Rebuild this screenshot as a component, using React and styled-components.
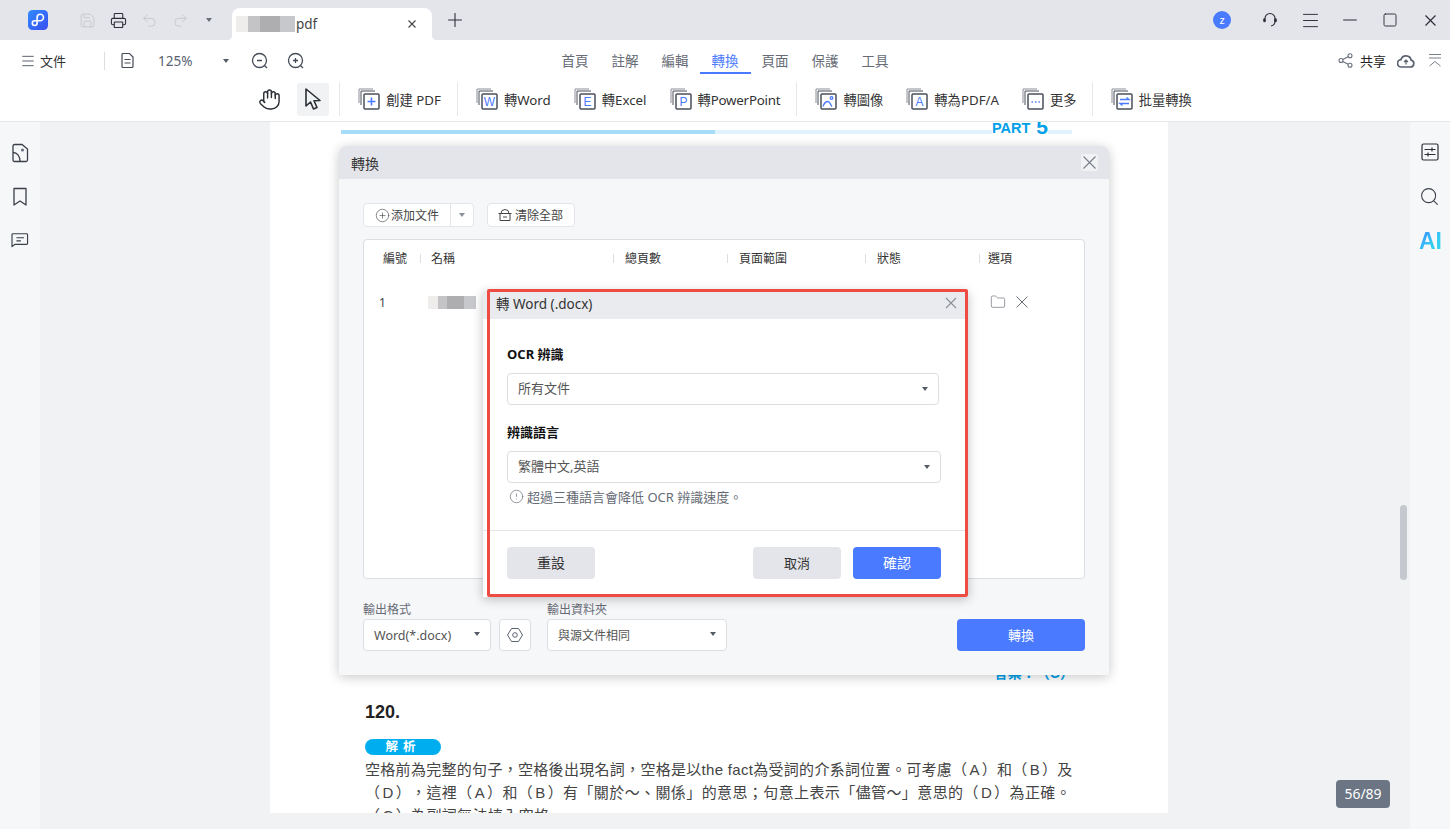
import React from 'react'
import styled, { createGlobalStyle } from 'styled-components'
import { Printer, Undo2, Redo2, Save, Plus, Minus, Menu, Square, Hand, Folder, CirclePlus, CircleAlert, Search } from 'lucide-react'

const Global = createGlobalStyle`
  html, body { margin: 0; padding: 0; height: 100%; overflow: hidden; }
  body { font-family: "Liberation Sans", "Noto Sans CJK TC", sans-serif; color: #333; }
  * { box-sizing: border-box; }
`

const UI_FONT = `"Noto Sans", "Noto Sans CJK TC", sans-serif`

const Shell = styled.div`
  width: 100%;
  height: 100vh;
  display: flex;
  flex-direction: column;
  background: #fff;
  font-family: ${UI_FONT};
`

// ---- title bar
const TitleBar = styled.div`
  height: 40px;
  flex: none;
  display: flex;
  align-items: center;
  background: #e4e5ea;
  padding-left: 28px;
`
const Logo = styled.svg`
  width: 20px;
  height: 20px;
  margin-right: 24px;
`
const QuickSlot = styled.div`
  width: 31px;
  display: flex;
  justify-content: center;
  color: ${p => (p.$off ? '#c4c6cb' : '#2c2f36')};
`
const Caret = styled.span`
  width: 0;
  height: 0;
  border-left: 3.5px solid transparent;
  border-right: 3.5px solid transparent;
  border-top: 4px solid ${p => p.$color || '#555b66'};
`
const CaretSlot = styled.div`
  display: flex;
  margin: 0 20px 0 10px;
`
const DocTab = styled.div`
  position: relative;
  align-self: flex-end;
  width: 200px;
  height: 32px;
  background: #fff;
  border-radius: 8px 8px 0 0;
  display: flex;
  align-items: center;
  padding: 0 16px 0 4px;
  font-size: 13.5px;
  color: #444;
  &::before, &::after {
    content: '';
    position: absolute;
    bottom: 0;
    width: 5px;
    height: 5px;
  }
  &::before { left: -5px; background: radial-gradient(circle at 0 0, #e4e5ea 5px, #fff 5.5px); }
  &::after { right: -5px; background: radial-gradient(circle at 100% 0, #e4e5ea 5px, #fff 5.5px); }
`
const BlurName = styled.span`
  display: block;
  flex: none;
  width: ${p => p.$w}px;
  height: ${p => p.$h}px;
  background: linear-gradient(90deg, #eeedeb 0 20%, #c4c4c6 20% 40%, #aeaeb0 40% 75%, #c6c8cc 75% 100%);
`
const TabName = styled.span`
  flex: 1;
  margin-left: 1px;
`
const NewTab = styled.div`
  display: flex;
  color: #2c2f36;
  margin-left: 12px;
`
const WinControls = styled.div`
  margin-left: auto;
  display: flex;
  align-items: center;
`
const Avatar = styled.div`
  width: 18px;
  height: 18px;
  border-radius: 50%;
  background: #4a7aff;
  color: #fff;
  font-size: 11px;
  line-height: 17px;
  text-align: center;
  margin-right: 19px;
`
const WinSlot = styled.div`
  width: 40px;
  display: flex;
  justify-content: center;
  color: #2c2f36;
`

// ---- menu bar
const MenuBar = styled.div`
  height: 41px;
  flex: none;
  display: grid;
  grid-template-columns: 1fr auto 1fr;
  align-items: center;
`
const MenuLeft = styled.div`
  display: flex;
  align-items: center;
  padding-left: 20px;
  color: #444b57;
`
const MenuLabel = styled.span`
  font-size: 13px;
  color: #333;
  margin-left: 4px;
`
const MenuDivider = styled.span`
  width: 1px;
  height: 18px;
  background: #dcdde0;
  margin: 0 15px 0 38px;
`
const Percent = styled.span`
  font-size: 13.5px;
  color: #5a6270;
  margin: 0 31px 0 22px;
`
const ZoomSlot = styled.div`
  display: flex;
  margin-left: ${p => p.$ml || 0}px;
`
const Tabs = styled.div`
  display: flex;
  gap: 23px;
`
const TabItem = styled.div`
  position: relative;
  font-size: 13.5px;
  line-height: 20px;
  color: ${p => (p.$active ? '#4a7aff' : '#666b75')};
  &::after {
    content: ${p => (p.$active ? "''" : 'none')};
    position: absolute;
    left: -12px;
    right: -12px;
    bottom: -3px;
    height: 2px;
    background: #4a7aff;
  }
`
const MenuRight = styled.div`
  display: flex;
  align-items: center;
  justify-content: flex-end;
  padding-right: 8px;
  color: #5a6270;
`
const ShareLabel = styled.span`
  font-size: 13px;
  color: #222;
  margin: 0 11px 0 7px;
`

// ---- tool bar
const ToolBar = styled.div`
  height: 41px;
  flex: none;
  display: flex;
  align-items: center;
  justify-content: center;
  padding-bottom: 4px;
  border-bottom: 1px solid #e5e6e8;
`
const ToolGroup = styled.div`
  display: flex;
  align-items: center;
  gap: ${p => p.$gap || 23}px;
`
const ToolSep = styled.span`
  width: 1px;
  height: 34px;
  background: #e6e7e9;
  margin: 0 18px 0 ${p => p.$left || 16}px;
`
const PointerBtn = styled.div`
  width: 32px;
  height: 33px;
  border-radius: 3px;
  background: #f1f2f4;
  display: flex;
  align-items: center;
  justify-content: center;
`
const ToolIconSlot = styled.div`
  display: flex;
  color: #2c2f36;
`
const ToolItem = styled.div`
  display: flex;
  align-items: center;
  gap: 6px;
  font-size: 13.3px;
  letter-spacing: ${p => p.$ls || 0}px;
  color: #333;
  white-space: nowrap;
`

// ---- body
const Body = styled.div`
  flex: 1;
  min-height: 0;
  display: flex;
`
const Rail = styled.div`
  width: 40px;
  flex: none;
  background: #f6f7f9;
  display: flex;
  flex-direction: column;
  align-items: center;
  gap: ${p => p.$gap}px;
  padding: ${p => p.$top}px ${p => p.$pr || 0}px 0 0;
  color: #3a3f4a;
`
const RailIcon = styled.div`
  height: 20px;
  display: flex;
  align-items: center;
  justify-content: center;
`
const AiMark = styled.div`
  font-family: "Liberation Sans", sans-serif;
  font-weight: 700;
  font-size: 23px;
  line-height: 24px;
  margin-left: 2px;
  background: linear-gradient(135deg, #3a8cff 10%, #37c8f6 55%, #2fd9e6);
  -webkit-background-clip: text;
  background-clip: text;
  color: transparent;
`
const Canvas = styled.div`
  position: relative;
  flex: 1;
  min-width: 0;
  background: #f1f2f4;
  padding: 0 0 16px 230px;
`
const Page = styled.div`
  position: relative;
  width: 898px;
  height: 100%;
  background: #fff;
  overflow: hidden;
  padding: 8px 96px 0 95px;
  font-family: "Liberation Sans", "Noto Sans CJK TC", sans-serif;
  text-spacing-trim: space-all;
`
const Track = styled.div`
  height: 4px;
  margin-left: -24px;
  background: linear-gradient(90deg, #a5dcf8 0 51.2%, #e0f3fd 51.2% 100%);
`
const PartMark = styled.div`
  position: absolute;
  top: 0;
  left: 722px;
  width: 56px;
  height: 14px;
  overflow: hidden;
  background: #fff;
  color: #00a0e9;
  font-weight: 700;
  font-size: 14.5px;
  line-height: 13px;
  white-space: nowrap;
  display: flex;
  justify-content: space-between;
`
const PartDigit = styled.span`
  font-size: 21px;
  line-height: 9px;
`
const Answer = styled.div`
  margin: 529px -2px 0 0;
  text-align: right;
  color: #00a0e9;
  font-weight: 700;
  font-size: 14px;
  line-height: 20px;
`
const Question = styled.div`
  margin-top: 17px;
  font-size: 18px;
  font-weight: 700;
  line-height: 24px;
  color: #222;
`
const Pill = styled.div`
  margin-top: 15px;
  width: 76px;
  height: 16px;
  border-radius: 8px;
  background: #00aeef;
  color: #fff;
  font-size: 12.5px;
  font-weight: 700;
  line-height: 16px;
  letter-spacing: 5px;
  text-align: center;
`
const Para = styled.div`
  margin-top: 3px;
  font-size: 15px;
  line-height: 23px;
  color: #444;
  white-space: nowrap;
`
const ParaLine = styled.div`
  letter-spacing: ${p => p.$ls || 0.4}px;
`
const Opt = styled.span`
  padding: 0 2px;
`
const Scroll = styled.div`
  position: absolute;
  right: 3px;
  top: 383px;
  width: 7px;
  height: 75px;
  border-radius: 4px;
  background: #c5c8ce;
`
const Counter = styled.div`
  position: absolute;
  right: 20px;
  bottom: 21px;
  width: 54px;
  height: 28px;
  border-radius: 4px;
  background: #6b7584;
  color: #fff;
  font-size: 14px;
  line-height: 28px;
  text-align: center;
`

// ---- convert dialog
const Dialog = styled.div`
  position: absolute;
  left: 69px;
  top: 24px;
  width: 770px;
  height: 529px;
  background: #f6f7f9;
  border-radius: 8px 8px 0 0;
  box-shadow: 0 2px 12px rgba(0, 0, 0, 0.22);
  display: flex;
  flex-direction: column;
  font-family: ${UI_FONT};
`
const DialogHead = styled.div`
  height: 33px;
  flex: none;
  background: #e4e5ea;
  border-radius: 8px 8px 0 0;
  display: flex;
  align-items: center;
  justify-content: space-between;
  padding: 0 11px 0 12px;
  font-size: 14px;
  color: #333;
`
const HeadClose = styled.div`
  width: 17px;
  height: 17px;
  background: #f1f2f4;
  border-radius: 3px;
  display: flex;
  align-items: center;
  justify-content: center;
  color: #777c86;
`
const DialogBody = styled.div`
  flex: 1;
  padding: 24px 24px 0;
  display: flex;
  flex-direction: column;
`
const FileActions = styled.div`
  display: flex;
  gap: 13px;
  height: 24px;
`
const ActionBtn = styled.div`
  height: 24px;
  background: #fff;
  border: 1px solid #e4e5ea;
  border-radius: 4px;
  display: flex;
  align-items: center;
  font-size: 12px;
  color: #444;
`
const ActionText = styled.span`
  display: flex;
  align-items: center;
  gap: ${p => p.$gap || 1}px;
  padding: 0 11px 0 ${p => p.$pl || 11}px;
`
const ActionArrow = styled.span`
  width: 23px;
  height: 100%;
  border-left: 1px solid #e4e5ea;
  display: flex;
  align-items: center;
  justify-content: center;
`
const FileTable = styled.div`
  margin-top: 12px;
  height: 340px;
  background: #fff;
  border: 1px solid #dcdee2;
  border-radius: 4px;
`
const TableRow = styled.div`
  display: grid;
  grid-template-columns: 56px 193px 114px 138px 114px 1fr;
  height: ${p => p.$h}px;
  align-items: center;
  font-size: 12px;
  color: #333;
`
const HeadCell = styled.div`
  display: flex;
  align-items: center;
  gap: ${p => p.$gap || 10}px;
  padding-left: ${p => p.$pl || 0}px;
`
const CellSep = styled.span`
  width: 1px;
  height: 9px;
  background: #dcdee2;
`
const RowCell = styled.div`
  display: flex;
  align-items: center;
  gap: 10px;
  padding-left: ${p => p.$pl || 0}px;
  color: #444;
`
const RowIcons = styled(RowCell)`
  color: #666b75;
`
const FooterRow = styled.div`
  margin-top: 24px;
  display: flex;
  align-items: flex-end;
`
const Field = styled.div`
  width: ${p => p.$w}px;
  margin-right: ${p => p.$mr}px;
`
const FieldLabel = styled.div`
  font-size: 12px;
  line-height: 14px;
  margin-bottom: 2px;
  color: #666b75;
`
const SelectBox = styled.div`
  width: ${p => (p.$w ? `${p.$w}px` : '100%')};
  height: 32px;
  background: #fff;
  border: 1px solid #dcdee2;
  border-radius: 4px;
  display: flex;
  align-items: center;
  justify-content: space-between;
  padding: 0 10px;
  font-size: ${p => p.$fs || 12}px;
  color: #555;
`
const SubSelect = styled(SelectBox)`
  font-size: 13px;
  padding-bottom: 3px;
`
const SmallCaret = styled(Caret)`
  margin-bottom: 3px;
`
const SubCaret = styled(Caret)`
  margin-top: 2px;
`
const GearBtn = styled.div`
  width: 32px;
  height: 32px;
  margin-right: 16px;
  background: #fff;
  border: 1px solid #dcdee2;
  border-radius: 4px;
  display: flex;
  align-items: center;
  justify-content: center;
  color: #5a6270;
`
const Primary = styled.div`
  width: ${p => p.$w || 88}px;
  height: 32px;
  margin-left: ${p => (p.$auto ? 'auto' : '0')};
  border-radius: 4px;
  background: #4a7aff;
  color: #fff;
  font-size: ${p => p.$fs || 13}px;
  line-height: 32px;
  text-align: center;
`

// ---- word options dialog
const SubDialog = styled.div`
  position: absolute;
  left: 144px;
  top: 145px;
  width: 485px;
  height: 306px;
  background: #fff;
  box-shadow: 0 2px 10px rgba(0, 0, 0, 0.25);
  display: flex;
  flex-direction: column;
`
const RedFrame = styled.div`
  position: absolute;
  left: 4px;
  top: -2px;
  width: 481px;
  height: 308px;
  border: 3px solid #ee4b42;
  border-radius: 2px;
  pointer-events: none;
`
const SubHead = styled.div`
  height: 28px;
  flex: none;
  background: #e9ebee;
  display: flex;
  align-items: center;
  justify-content: space-between;
  padding: 0 10px 4px 13px;
  font-size: 13.5px;
  color: #333;
`
const SubBody = styled.div`
  flex: 1;
  padding: 25px 0 0 24px;
`
const SubLabel = styled.div`
  font-size: 13px;
  font-weight: 700;
  line-height: 20px;
  margin: ${p => p.$mt || 0}px 0 9px;
  color: #111;
`
const Note = styled.div`
  margin-top: 6px;
  padding-left: 2px;
  display: flex;
  align-items: center;
  gap: 3px;
  font-size: 13px;
  line-height: 14px;
  color: #666b75;
`
const SubFoot = styled.div`
  height: 67px;
  flex: none;
  border-top: 1px solid #e4e5ea;
  padding: 16px 27px 0 24px;
  display: flex;
  gap: 12px;
`
const GreyBtn = styled.div`
  width: 88px;
  height: 32px;
  margin-right: ${p => (p.$auto ? 'auto' : '0')};
  border-radius: 4px;
  background: #e4e5ea;
  color: #333;
  font-size: ${p => p.$fs || 13}px;
  line-height: 32px;
  text-align: center;
`

const Cross = ({ size, width = 1.1 }) => (
  <svg width={size} height={size} viewBox={`0 0 ${size} ${size}`} fill="none" stroke="currentColor" strokeWidth={width}>
    <path d={`M.5 .5L${size - 0.5} ${size - 0.5}M${size - 0.5} .5L.5 ${size - 0.5}`} />
  </svg>
)

// toolbar sheet icon, the letter is real text
const Sheet = ({ children, glyph }) => (
  <svg width="22" height="22" viewBox="0 0 22 22" fill="none">
    <path d="M1 15V1h14" stroke="#8a8f98" strokeWidth="1" />
    <path d="M3 17V3h14" stroke="#4a4f59" strokeWidth="1" />
    <rect x="6" y="6" width="15" height="15" rx="1" fill="#fff" stroke="#4a4f59" strokeWidth="1.5" />
    {glyph && <text x="13.5" y="17.8" textAnchor="middle" fontSize="12" fontFamily="Liberation Sans" fill="#4a7aff">{glyph}</text>}
    {children}
  </svg>
)

const tool = (glyph, extra, label, ls) => (
  <ToolItem key={label} $ls={ls}>
    <Sheet glyph={glyph}>{extra}</Sheet>
    {label}
  </ToolItem>
)

const plusMark = <path d="M13.5 9.5v8M9.5 13.5h8" stroke="#4a7aff" strokeWidth="1.6" />
const pictureMark = (
  <g stroke="#4a7aff" strokeWidth="1.3" fill="none">
    <circle cx="16.5" cy="10" r="1.3" />
    <path d="M8 18.5c1-3 3-5 5-5s2 3 4 5" />
  </g>
)
const dotsMark = <path d="M9.5 14h1.4M13 14h1.4M16.5 14h1.4" stroke="#4a7aff" strokeWidth="1.5" />
const swapMark = <path d="M9 11.5h9l-2.5-2M18 15.5H9l2.5 2" stroke="#4a7aff" strokeWidth="1.4" fill="none" />

export default function App() {
  return (
    <Shell>
      <Global />
      <TitleBar>
        <Logo viewBox="0 0 20 20">
          <defs>
            <linearGradient id="lg" x1="0" y1="0" x2="1" y2="1">
              <stop offset="0" stopColor="#2f8bff" />
              <stop offset="1" stopColor="#3a4ff0" />
            </linearGradient>
          </defs>
          <rect width="20" height="20" rx="4.5" fill="url(#lg)" />
          <path d="M5.9 10.4H11.5a3.2 3.2 0 1 0-3.2-3.2V12.8a2.4 2.4 0 1 1-2.4-2.4" fill="none" stroke="#fff" strokeWidth="1.6" transform="translate(.8 .3)" />
        </Logo>
        <QuickSlot $off><Save size={17} strokeWidth={1.3} /></QuickSlot>
        <QuickSlot><Printer size={17} strokeWidth={1.5} /></QuickSlot>
        <QuickSlot $off><Undo2 size={17} strokeWidth={1.3} /></QuickSlot>
        <QuickSlot $off><Redo2 size={17} strokeWidth={1.3} /></QuickSlot>
        <CaretSlot><Caret $color="#6a7078" /></CaretSlot>
        <DocTab>
          <BlurName $w={59} $h={16} />
          <TabName>pdf</TabName>
          <Cross size={8} />
        </DocTab>
        <NewTab><Plus size={22} strokeWidth={1.2} /></NewTab>
        <WinControls>
          <Avatar>z</Avatar>
          <WinSlot>
            <svg width="16" height="16" viewBox="0 0 16 16" fill="none" stroke="#2c2f36" strokeWidth="1.1">
              <path d="M3 7V6.5a5 5 0 0 1 10 0V9c0 2.6-1.5 4.5-4 5" />
              <rect x="1.8" y="6.8" width="1.4" height="3" rx=".7" fill="#2c2f36" />
              <rect x="12.8" y="6.8" width="1.4" height="3" rx=".7" fill="#2c2f36" />
            </svg>
          </WinSlot>
          <WinSlot><Menu size={21} strokeWidth={1.1} /></WinSlot>
          <WinSlot><Minus size={22} strokeWidth={1.1} /></WinSlot>
          <WinSlot><Square size={16} strokeWidth={1.4} /></WinSlot>
          <WinSlot><Cross size={11} width={1.2} /></WinSlot>
        </WinControls>
      </TitleBar>

      <MenuBar>
        <MenuLeft>
          <Menu size={16} strokeWidth={1.3} />
          <MenuLabel>文件</MenuLabel>
          <MenuDivider />
          <svg width="16" height="17" viewBox="0 0 16 17" fill="none" stroke="#444b57" strokeWidth="1.2">
            <path d="M2 2.5a1 1 0 0 1 1-1h6.5L13 5v9.5a1 1 0 0 1-1 1H3a1 1 0 0 1-1-1z" />
            <path d="M4.5 7.5h6M4.5 11h6" />
          </svg>
          <Percent>125%</Percent>
          <Caret />
          <ZoomSlot $ml={22}>
            <svg width="18" height="18" viewBox="0 0 18 18" fill="none" stroke="#444b57" strokeWidth="1.3">
              <circle cx="8.5" cy="8.5" r="7" /><path d="M13.5 13.5l2.5 2.5M6 8.5h5" />
            </svg>
          </ZoomSlot>
          <ZoomSlot $ml={18}>
            <svg width="18" height="18" viewBox="0 0 18 18" fill="none" stroke="#444b57" strokeWidth="1.3">
              <circle cx="8.5" cy="8.5" r="7" /><path d="M13.5 13.5l2.5 2.5M6 8.5h5M8.5 6v5" />
            </svg>
          </ZoomSlot>
        </MenuLeft>
        <Tabs>
          <TabItem>首頁</TabItem>
          <TabItem>註解</TabItem>
          <TabItem>編輯</TabItem>
          <TabItem $active>轉換</TabItem>
          <TabItem>頁面</TabItem>
          <TabItem>保護</TabItem>
          <TabItem>工具</TabItem>
        </Tabs>
        <MenuRight>
          <svg width="15" height="15" viewBox="0 0 15 15" fill="none" stroke="#6a717d" strokeWidth="1.1">
            <circle cx="3" cy="7.5" r="2" /><circle cx="12" cy="2.8" r="2" /><circle cx="12" cy="12.2" r="2" />
            <path d="M4.8 6.6l5.4-2.9M4.8 8.4l5.4 2.9" />
          </svg>
          <ShareLabel>共享</ShareLabel>
          <svg width="18" height="14" viewBox="0 0 18 14" fill="none">
            <path d="M4.5 13h9a3.5 3.5 0 0 0 .6-6.9A5.2 5.2 0 0 0 4 5.6 3.7 3.7 0 0 0 4.5 13z" stroke="#5a6270" strokeWidth="1.7" />
            <path d="M9 10.5V6M7 8l2-2 2 2" stroke="#5a6270" strokeWidth="1.2" />
          </svg>
          <svg width="14" height="15" viewBox="0 0 14 15" fill="none" stroke="#7a808b" strokeWidth="1" style={{ marginLeft: 13 }}>
            <path d="M1 1.5h12M1 5h12M1.5 13l5.5-4.5 5.5 4.5" />
          </svg>
        </MenuRight>
      </MenuBar>

      <ToolBar>
        <ToolGroup $gap={16}>
          <ToolIconSlot><Hand size={23} strokeWidth={1.5} /></ToolIconSlot>
          <PointerBtn>
            <svg width="18" height="24" viewBox="0 0 18 24" fill="none" stroke="#2c2f36" strokeWidth="1.6" strokeLinejoin="round">
              <path d="M2 2v17l4.5-4 3 7 3.5-1.5-3-6.8 6-.2z" />
            </svg>
          </PointerBtn>
        </ToolGroup>
        <ToolSep $left={10} />
        {tool(null, plusMark, '創建 PDF')}
        <ToolSep />
        <ToolGroup>
          {tool('W', null, '轉Word')}
          {tool('E', null, '轉Excel')}
          {tool('P', null, '轉PowerPoint', -0.2)}
        </ToolGroup>
        <ToolSep />
        <ToolGroup>
          {tool(null, pictureMark, '轉圖像')}
          {tool('A', null, '轉為PDF/A')}
          {tool(null, dotsMark, '更多')}
        </ToolGroup>
        <ToolSep $left={15} />
        {tool(null, swapMark, '批量轉換')}
      </ToolBar>

      <Body>
        <Rail $gap={23.5} $top={21}>
          <RailIcon>
            <svg width="18" height="20" viewBox="0 0 18 20" fill="none" stroke="#3a3f4a" strokeWidth="1.3">
              <path d="M2 3a1.5 1.5 0 0 1 1.5-1.5H11L16.5 6v11a1.5 1.5 0 0 1-1.5 1.5H3.5A1.5 1.5 0 0 1 2 17z" />
              <circle cx="11.5" cy="7" r="1.6" fill="#6a717d" stroke="none" />
              <path d="M2 9.5c4 0 7 3.5 7 9" />
            </svg>
          </RailIcon>
          <RailIcon>
            <svg width="16" height="20" viewBox="0 0 16 20" fill="none" stroke="#3a3f4a" strokeWidth="1.3">
              <path d="M2 1.5h12v16.5L8 14l-6 4z" strokeLinejoin="round" />
            </svg>
          </RailIcon>
          <RailIcon>
            <svg width="18" height="16" viewBox="0 0 20 18" fill="none" stroke="#3a3f4a" strokeWidth="1.3">
              <path d="M2.5 2h15a1 1 0 0 1 1 1v10a1 1 0 0 1-1 1H4l-3 2.5V3a1 1 0 0 1 1-1z" strokeLinejoin="round" />
              <path d="M6 6.5h8.500M6 10h5" />
            </svg>
          </RailIcon>
        </Rail>

        <Canvas>
          <Page>
            <Track />
            <PartMark>PART<PartDigit>5</PartDigit></PartMark>
            <Answer>答案：（C）</Answer>
            <Question>120.</Question>
            <Pill>解析</Pill>
            <Para>
              <ParaLine $ls={0.3}>空格前為完整的句子，空格後出現名詞，空格是以the fact為受詞的介系詞位置。可考慮（<Opt>A</Opt>）和（<Opt>B</Opt>）及</ParaLine>
              <ParaLine>（<Opt>D</Opt>），這裡（<Opt>A</Opt>）和（<Opt>B</Opt>）有「關於～、關係」的意思；句意上表示「儘管～」意思的（<Opt>D</Opt>）為正確。</ParaLine>
              <ParaLine>（<Opt>C</Opt>）為副詞無法填入空格。</ParaLine>
            </Para>

            <Dialog>
              <DialogHead>
                轉換
                <HeadClose><Cross size={13} /></HeadClose>
              </DialogHead>
              <DialogBody>
                <FileActions>
                  <ActionBtn>
                    <ActionText><CirclePlus size={15} strokeWidth={1} />添加文件</ActionText>
                    <ActionArrow><Caret $color="#8a8f98" /></ActionArrow>
                  </ActionBtn>
                  <ActionBtn>
                    <ActionText $pl={10} $gap={3}>
                      <svg width="14" height="14" viewBox="0 0 14 14" fill="none" stroke="#444" strokeWidth="1">
                        <path d="M3 5.5a4 4 0 0 1 8 0M.5 5.5h13M2 5.5v7h10v-7M5 9h4" />
                      </svg>
                      清除全部
                    </ActionText>
                  </ActionBtn>
                </FileActions>
                <FileTable>
                  <TableRow $h={36}>
                    <HeadCell $pl={19}>編號</HeadCell>
                    <HeadCell><CellSep />名稱</HeadCell>
                    <HeadCell $gap={11}><CellSep />總頁數</HeadCell>
                    <HeadCell $gap={11}><CellSep />頁面範圍</HeadCell>
                    <HeadCell $gap={11}><CellSep />狀態</HeadCell>
                    <HeadCell $gap={8}><CellSep />選項</HeadCell>
                  </TableRow>
                  <TableRow $h={52}>
                    <RowCell $pl={15}>1</RowCell>
                    <RowCell $pl={8}><BlurName $w={48} $h={13} /></RowCell>
                    <RowCell />
                    <RowCell />
                    <RowCell />
                    <RowIcons $pl={11}>
                      <Folder size={16} strokeWidth={1} />
                      <Cross size={12} width={1} />
                    </RowIcons>
                  </TableRow>
                </FileTable>
                <FooterRow>
                  <Field $w={128} $mr={8}>
                    <FieldLabel>輸出格式</FieldLabel>
                    <SelectBox $fs={12.5}>Word(*.docx)<SmallCaret /></SelectBox>
                  </Field>
                  <GearBtn>
                    <svg width="18" height="18" viewBox="0 0 18 18" fill="none" stroke="#5a6270" strokeWidth="1">
                      <path d="M5.5 2.5h7L16.5 9l-4 6.500h-7L1.500 9z" strokeLinejoin="round" />
                      <circle cx="9" cy="9" r="2.3" />
                    </svg>
                  </GearBtn>
                  <Field $w={180} $mr={0}>
                    <FieldLabel>輸出資料夾</FieldLabel>
                    <SelectBox>與源文件相同<SmallCaret /></SelectBox>
                  </Field>
                  <Primary $w={128} $auto>轉換</Primary>
                </FooterRow>
              </DialogBody>

              <SubDialog>
                <SubHead>
                  轉 Word (.docx)
                  <svg width="14" height="14" viewBox="0 0 14 14" fill="none" stroke="#8a8f98" strokeWidth="1.1"><path d="M2 2l10 10M12 2L2 12" /></svg>
                </SubHead>
                <SubBody>
                  <SubLabel>OCR 辨識</SubLabel>
                  <SubSelect $w={432}>所有文件<SubCaret /></SubSelect>
                  <SubLabel $mt={17}>辨識語言</SubLabel>
                  <SubSelect $w={434}>繁體中文,英語<SubCaret /></SubSelect>
                  <Note><CircleAlert size={15} strokeWidth={1.1} />超過三種語言會降低 OCR 辨識速度。</Note>
                </SubBody>
                <SubFoot>
                  <GreyBtn $auto $fs={14}>重設</GreyBtn>
                  <GreyBtn>取消</GreyBtn>
                  <Primary $fs={14}>確認</Primary>
                </SubFoot>
                <RedFrame />
              </SubDialog>
            </Dialog>
          </Page>
          <Scroll />
          <Counter>56/89</Counter>
        </Canvas>

        <Rail $gap={24.5} $top={20} $pr={1}>
          <RailIcon>
            <svg width="18" height="18" viewBox="0 0 18 18" fill="none" stroke="#2c2f36" strokeWidth="1.2">
              <rect x="1" y="1" width="16" height="16" rx="1.5" />
              <path d="M3.5 6.5h11M3.5 11.5h11M11 4.5v4M7 9.5v4" />
            </svg>
          </RailIcon>
          <RailIcon><Search size={21} strokeWidth={1.2} /></RailIcon>
          <RailIcon><AiMark>AI</AiMark></RailIcon>
        </Rail>
      </Body>
    </Shell>
  )
}
